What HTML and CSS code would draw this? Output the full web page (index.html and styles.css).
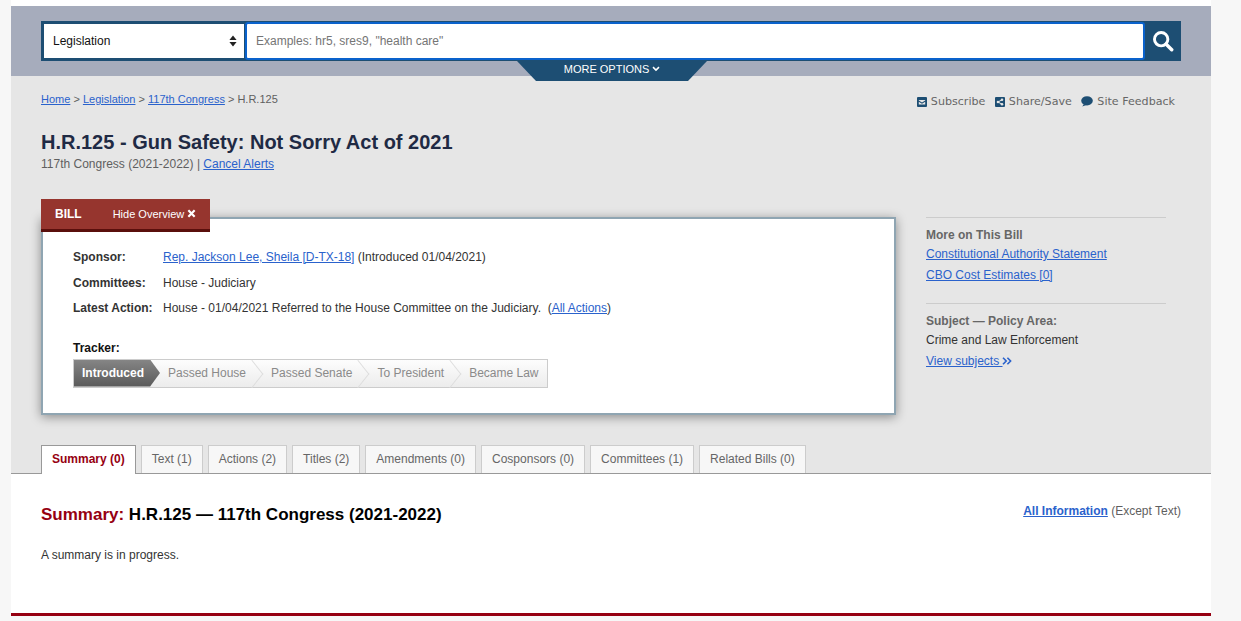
FILE: index.html
```html
<!DOCTYPE html>
<html lang="en">
<head>
  <meta charset="UTF-8" />
  <meta name="viewport" content="width=device-width, initial-scale=1.0"/>
  <title>H.R.125 - Gun Safety: Not Sorry Act of 2021</title>
  <link rel="stylesheet" href="styles.css">
</head>
<body>
<div class="page">

  <!-- Search header -->
  <header class="search-head">
    <form class="search-form">
      <div class="search-select">
        <span>Legislation</span>
        <svg class="select-arrows" viewBox="0 0 8 12" width="8" height="12"><path d="M4 0.5 L7.6 5 H0.4 Z M4 11.5 L0.4 7 H7.6 Z" fill="#222"/></svg>
      </div>
      <div class="search-input">Examples: hr5, sres9, "health care"</div>
      <div class="search-btn">
        <svg viewBox="0 0 24 24" width="22" height="22"><circle cx="10" cy="10" r="7.3" fill="none" stroke="#fff" stroke-width="3.2"/><path d="M15.5 15.5 L21.5 21.5" stroke="#fff" stroke-width="3.8" stroke-linecap="round"/></svg>
      </div>
    </form>
    <div class="more-options">MORE OPTIONS <svg viewBox="0 0 10 8" width="8" height="6"><path d="M1 1.5 L5 5.5 L9 1.5" fill="none" stroke="#fff" stroke-width="2"/></svg></div>
  </header>

  <main class="overview-area">
    <div class="crumb-row">
      <div class="breadcrumb"><a href="#">Home</a> &gt; <a href="#">Legislation</a> &gt; <a href="#">117th Congress</a> &gt; H.R.125</div>
      <div class="share-tools">
        <span><svg viewBox="0 0 10 10" width="10" height="10"><rect width="10" height="10" rx="1" fill="#1d4e73"/><path d="M1.8 3 H8.2 V3.6 L5 5.5 L1.8 3.6 Z M1.8 4.8 L5 6.7 L8.2 4.8 V7.6 H1.8 Z" fill="#e6e6e6"/></svg>Subscribe</span>
        <span><svg viewBox="0 0 10 10" width="10" height="10"><rect width="10" height="10" rx="1" fill="#1d4e73"/><circle cx="7" cy="2.8" r="1.3" fill="#e6e6e6"/><circle cx="7" cy="7.2" r="1.3" fill="#e6e6e6"/><circle cx="3" cy="5" r="1.3" fill="#e6e6e6"/><path d="M7 2.8 L3 5 L7 7.2" fill="none" stroke="#e6e6e6"/></svg>Share/Save</span>
        <span><svg viewBox="0 0 12 11" width="12" height="11"><ellipse cx="6" cy="4.8" rx="5.8" ry="4.6" fill="#1d4e73"/><path d="M3 8 L1.2 10.6 L5.5 9 Z" fill="#1d4e73"/></svg>Site Feedback</span>
      </div>
    </div>

    <h1 class="bill-title">H.R.125 - Gun Safety: Not Sorry Act of 2021</h1>
    <div class="bill-congress">117th Congress (2021-2022) | <a href="#">Cancel Alerts</a></div>

    <div class="overview-row">
      <section class="overview-box">
        <div class="bill-tab">
          <b>BILL</b>
          <span class="hide-link">Hide Overview <svg viewBox="0 0 10 10" width="9" height="9"><path d="M1.5 1.5 L8.5 8.5 M8.5 1.5 L1.5 8.5" stroke="#fff" stroke-width="2.4"/></svg></span>
        </div>
        <table class="overview-table">
          <tr><th>Sponsor:</th><td><a href="#">Rep. Jackson Lee, Sheila [D-TX-18]</a> (Introduced 01/04/2021)</td></tr>
          <tr><th>Committees:</th><td>House - Judiciary</td></tr>
          <tr><th>Latest Action:</th><td>House - 01/04/2021 Referred to the House Committee on the Judiciary.&nbsp; (<a href="#">All Actions</a>)</td></tr>
        </table>
        <div class="tracker-label">Tracker:</div>
        <ol class="tracker">
          <li class="selected">Introduced</li>
          <li>Passed House</li>
          <li>Passed Senate</li>
          <li>To President</li>
          <li>Became Law</li>
        </ol>
      </section>

      <aside class="side-col">
        <div class="side-block">
          <h3>More on This Bill</h3>
          <p><a href="#">Constitutional Authority Statement</a></p>
          <p><a href="#">CBO Cost Estimates [0]</a></p>
        </div>
        <div class="side-block">
          <h3>Subject — Policy Area:</h3>
          <p>Crime and Law Enforcement</p>
          <p><a href="#">View subjects </a><svg viewBox="0 0 12 10" width="10" height="8"><path d="M1 1 L5 5 L1 9 M6.5 1 L10.5 5 L6.5 9" fill="none" stroke="#2a62cc" stroke-width="2"/></svg></p>
        </div>
      </aside>
    </div>

    <nav class="tabs">
      <a class="active" href="#">Summary (0)</a>
      <a href="#">Text (1)</a>
      <a href="#">Actions (2)</a>
      <a href="#">Titles (2)</a>
      <a href="#">Amendments (0)</a>
      <a href="#">Cosponsors (0)</a>
      <a href="#">Committees (1)</a>
      <a href="#">Related Bills (0)</a>
    </nav>
  </main>

  <section class="content">
    <div class="content-head">
      <h2><span>Summary:</span> H.R.125 — 117th Congress (2021-2022)</h2>
      <div class="all-info"><a href="#">All Information</a> (Except Text)</div>
    </div>
    <p class="summary-text">A summary is in progress.</p>
  </section>
</div>
</body>
</html>
```
FILE: styles.css
```css
:root {
  --navy: #1d4e73;
  --link: #2a62cc;
  --muted: #5f5f5f;
  --panel: #e6e6e6;
}

* {
  margin: 0;
  padding: 0;
  box-sizing: border-box;
}

body {
  font-family: "Liberation Sans", Arial, sans-serif;
  font-size: 12px;
  background: #f7f7f7;
  color: #333;
  overflow: hidden;
}

a {
  color: var(--link);
}

.page {
  width: 1200px;
  height: 616px;
  margin-left: 11px;
  padding-top: 6px;
  background: #fff;
  border-bottom: 3px solid #960011;
}

/* search header */
.search-head {
  position: relative;
  height: 70px;
  padding: 15px 30px 0;
  background: #a6acbc;
}

.search-form {
  display: flex;
  height: 40px;
  background: var(--navy);
}

.search-select {
  width: 200px;
  margin: 3px 0 3px 3px;
  padding: 0 7px 0 9px;
  display: flex;
  justify-content: space-between;
  align-items: center;
  background: #fff;
  color: #111;
}

.search-input {
  flex: 1;
  display: flex;
  align-items: center;
  margin: 1px 0 1px 1px;
  padding-left: 9px;
  background: #fff;
  border: 2px solid #0a62cc;
  border-radius: 3px;
  color: #757575;
}

.search-btn {
  width: 36px;
  display: flex;
  justify-content: center;
  align-items: center;
}

.more-options {
  position: absolute;
  left: 506px;
  top: 55px;
  width: 190px;
  height: 20px;
  padding-bottom: 4px;
  display: flex;
  justify-content: center;
  align-items: center;
  gap: 3px;
  background: var(--navy);
  color: #fff;
  font-size: 11px;
  clip-path: polygon(0 0, 100% 0, 90% 100%, 10% 100%);
}

/* overview */
.overview-area {
  height: 398px;
  padding: 0 30px;
  background: var(--panel);
  border-bottom: 1px solid #999;
  font-size: 12px;
}

.crumb-row {
  display: flex;
  justify-content: space-between;
  padding-top: 17px;
  height: 50px;
}

.breadcrumb {
  font-size: 11px;
  color: var(--muted);
}

.share-tools {
  display: flex;
  gap: 9.5px;
  padding: 2px 6px 0 0;
  font-family: "DejaVu Sans", Verdana, sans-serif;
  font-size: 11.1px;
  color: #666;
}

.share-tools span {
  display: flex;
  align-items: center;
  gap: 4px;
  height: 13px;
}

.bill-title {
  font-size: 20px;
  line-height: 24px;
  color: #1f2a44;
  margin-top: 4px;
}

.bill-congress {
  color: var(--muted);
  line-height: 14px;
  margin-top: 3px;
}

.overview-row {
  display: flex;
  margin-top: 46px;
}

.overview-box {
  position: relative;
  width: 855px;
  height: 198px;
  padding: 31px 30px 0;
  background: #fff;
  border: 2px solid #8fa5b2;
  box-shadow: 0 2px 10px rgba(0, 0, 0, 0.4);
}

.bill-tab {
  position: absolute;
  left: -2px;
  top: -20px;
  width: 169px;
  height: 33px;
  padding: 8px 0 0 14px;
  display: flex;
  gap: 31px;
  background: #96352e;
  border-bottom: 3px solid #5a0f0c;
  color: #fff;
}

.hide-link {
  font-size: 11px;
  line-height: 14px;
}

.overview-table {
  border-collapse: collapse;
  color: #333;
}

.overview-table th {
  width: 90px;
  padding: 0 0 11.5px;
  text-align: left;
  line-height: 14px;
  white-space: nowrap;
}

.overview-table td {
  padding: 0 0 11.5px;
  line-height: 14px;
}

.tracker-label {
  margin-top: 14px;
  font-weight: bold;
  color: #111;
  line-height: 14px;
}

.tracker {
  list-style: none;
  display: flex;
  width: 475px;
  height: 29px;
  margin-top: 4px;
  border: 1px solid #ccc;
  background: linear-gradient(#fdfdfd, #ececec);
  color: #8a8a8a;
}

.tracker li {
  position: relative;
  flex: 0 0 auto;
  padding: 0 17px 0 8px;
  line-height: 27px;
}

.tracker li:not(:last-child)::after {
  content: '';
  position: absolute;
  right: 1.3px;
  top: 4px;
  width: 19px;
  height: 19px;
  border-top: 1px solid #ddd;
  border-right: 1px solid #ddd;
  transform: scaleX(0.8) rotate(45deg);
}

.tracker li.selected {
  width: 86px;
  padding: 0 0 0 8px;
  background: linear-gradient(#858585, #5a5a5a);
  color: #fff;
  font-weight: bold;
  clip-path: polygon(0 0, 88.5% 0, 100% 50%, 88.5% 100%, 0 100%);
}

.tracker li.selected::after {
  display: none;
}

/* right column */
.side-col {
  width: 240px;
  margin-left: 30px;
  color: #333;
}

.side-block {
  border-top: 1px solid #ccc;
  height: 86px;
  padding-top: 10px;
}

.side-block h3 {
  font-size: 12px;
  line-height: 14px;
  color: #666;
}

.side-block p {
  margin-top: 7px;
  line-height: 14px;
}

.side-block h3 + p {
  margin-top: 5px;
}

/* tabs */
.tabs {
  display: flex;
  gap: 5px;
  margin-top: 30px;
  height: 28px;
}

.tabs a {
  padding: 0 10px;
  line-height: 26px;
  height: 28px;
  background: #f7f7f7;
  border: 1px solid #ccc;
  border-bottom: 0;
  color: #666;
  text-decoration: none;
}

.tabs a.active {
  position: relative;
  height: 29px;
  background: #fff;
  border-color: #999;
  color: #960011;
  font-weight: bold;
}

/* summary */
.content {
  padding: 0 30px;
  background: #fff;
  height: 139px;
}

.content-head {
  display: flex;
  justify-content: space-between;
  padding-top: 29px;
}

.content-head h2 {
  font-size: 17px;
  line-height: 24px;
  color: #000;
}

.content-head h2 span {
  color: #960011;
}

.all-info {
  color: var(--muted);
  line-height: 16px;
}

.all-info a {
  font-weight: bold;
}

.summary-text {
  margin-top: 21px;
  line-height: 14px;
}
```
